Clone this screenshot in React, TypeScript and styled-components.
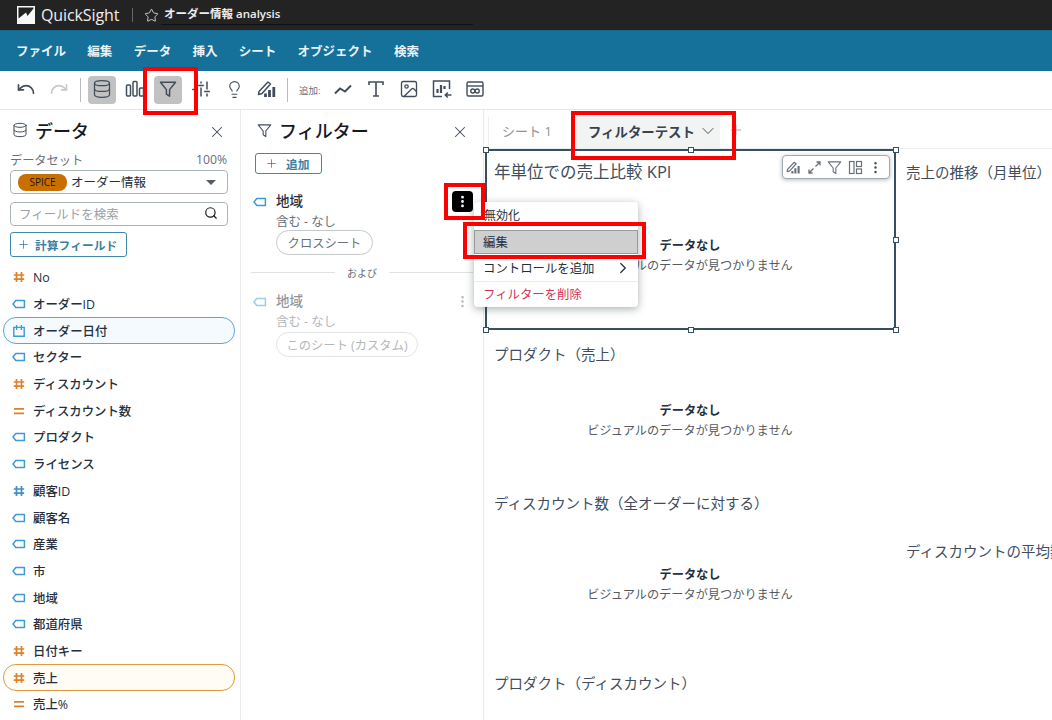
import React from "react";
import styled, { createGlobalStyle } from "styled-components";
import { Undo, Redo, Database, Lightbulb, X, Search, Plus, ChevronDown, ChevronRight, Star, Image as ImageIcon, EllipsisVertical } from "lucide-react";

const Global = createGlobalStyle`
  html, body { margin: 0; padding: 0; background: #fff; }
  body { font-family: "Open Sans", "Noto Sans CJK JP", sans-serif; color: #16191f; }
  * { box-sizing: border-box; }
`;

const Page = styled.div`
  position: relative; width: 1052px; height: 720px; overflow: hidden;
  display: flex; flex-direction: column; background: #fff;
`;
const TopBar = styled.header`
  height: 30px; background: #232323; color: #f2f2f2; display: flex; align-items: center; padding-left: 17px; flex: none;
`;
const Brand = styled.span`
  font-size: 16px; margin-left: 6px; width: 91px; color: #eee; letter-spacing: -.1px;
`;
const TopDivider = styled.i` width: 1px; height: 14px; background: #666; `;
const StarSlot = styled.span` margin-left: 11px; width: 19px; display: flex; color: #ddd; `;
const AnalysisName = styled.div`
  font-size: 11.5px; font-weight: 600; width: 312px; height: 25px; line-height: 27px; margin-left: -2px; padding-left: 3px;
  border-bottom: 1px solid #111; align-self: flex-start; color: #eee;
`;
const MenuBar = styled.nav`
  height: 41px; flex: none; background: #15709a; display: flex; align-items: center; gap: 21.3px; padding-left: 16px;
  border-top: 1px solid #12688f; padding-bottom: 2px;
`;
const MenuItem = styled.span` font-size: 12.5px; font-weight: 700; color: #eaf3f7; white-space: nowrap; `;
const ToolBar = styled.div`
  height: 39px; flex: none; display: flex; align-items: center; padding-left: 10px; border-bottom: 1px solid #e4e6e8; color: #414d5c;
`;
const ToolButton = styled.span<{ $on?: boolean; $faint?: boolean }>`
  width: 33px; height: 28px; display: flex; align-items: center; justify-content: center; position: relative;
  color: ${p => (p.$faint ? "#c5cacf" : "#414d5c")};
  &::before {
    content: ""; position: absolute; top: 0; bottom: 0; left: 2px; right: 3px; border-radius: 4px;
    background: ${p => (p.$on ? "#c2c2c2" : "transparent")};
  }
  & > svg { position: relative; left: -.5px; top: -1px; }
`;
const ToolDivider = styled.i<{ $l: number; $r: number }>`
  width: 1px; height: 24px; background: #b8bcc0; margin: 0 ${p => p.$r}px 0 ${p => p.$l}px;
`;
const AddLabel = styled.span` font-size: 9.5px; color: #687078; width: 28px; white-space: nowrap; `;
const Work = styled.div` flex: 1; display: flex; min-height: 0; `;
const DataPanel = styled.aside`
  width: 241px; flex: none; border-right: 1px solid #e9ebed; padding: 8px 0 0 0;
`;
const FilterPanel = styled.aside`
  width: 243px; flex: none; border-right: 1px solid #e9ebed; padding: 8px 0 0 0; position: relative;
`;
const PanelHead = styled.div<{ $ml: number }>`
  display: flex; align-items: center; height: 24px; margin-left: ${p => p.$ml}px; color: #414d5c; position: relative;
`;
const PanelTitle = styled.h2` font-size: 18px; font-weight: 500; margin: 0 0 0 7px; color: #16191f; `;
const CloseSlot = styled.span<{ $left: number }>`
  position: absolute; left: ${p => p.$left}px; top: 5px; display: flex; color: #414d5c;
`;
const SetRow = styled.div`
  display: flex; justify-content: space-between; width: 217px; margin: 9px 0 2px 10px; font-size: 12.2px; color: #687078; height: 17px; align-items: center;
`;
const SelectBox = styled.div`
  margin-left: 10px; width: 218px; height: 24px; border: 1px solid #aab7b8; border-radius: 4px; display: flex; align-items: center; padding: 0 0 2px 7px; position: relative; font-size: 12.5px; color: #232f3e;
`;
const Spice = styled.span`
  background: #c76f00; color: #24160a; font-size: 10px; border-radius: 8px; height: 17px; width: 49px; text-align: center; line-height: 17px; margin: 2px 4px 0 0; flex: none;
`;
const Caret = styled.i`
  position: absolute; right: 11px; top: 9px; border: 5px solid transparent; border-top: 5px solid #545b64; border-bottom: 0;
`;
const SearchBox = styled.div`
  margin: 8px 0 0 10px; width: 218px; height: 24px; border: 1px solid #aab7b8; border-radius: 4px; display: flex; align-items: center; justify-content: space-between; padding: 0 9px 2px 8px; font-size: 12.5px; color: #9aa1a8;
  & > svg { color: #16191f; }
`;
const OutlineBtn = styled.div<{ $w: number; $h: number; $ml: number; $mt: number; $pad: number; $gap: number }>`
  width: ${p => p.$w}px; height: ${p => p.$h}px; margin: ${p => p.$mt}px 0 0 ${p => p.$ml}px; border: 1px solid #3e88a8; border-radius: 3px;
  display: flex; align-items: center; gap: ${p => p.$gap}px; padding: 0 0 1px ${p => p.$pad}px; font-size: 11.7px; font-weight: 600; color: #3d7f9f; letter-spacing: .1px;
`;
const FieldList = styled.ul` list-style: none; margin: 7px 0 0 3px; padding: 0; `;
const FieldRow = styled.li<{ $hl?: "blue" | "orange" }>`
  width: 232px; height: 26.7px; display: flex; align-items: center; gap: 7px; padding-left: 9px; font-size: 12.4px; font-weight: 500; color: #232f3e;
  border-radius: 13px; position: relative;
  ${p => p.$hl === "blue" ? "border: 1px solid #5ba8d4; background: #f4fafe; padding-left: 8px;" : ""}
  ${p => p.$hl === "orange" ? "border: 1px solid #e09a3e; background: #fffbf5; padding-left: 8px;" : ""}
  & > svg { flex: none; }
`;
const FilterGap = styled.div` height: 16px; `;
const FilterCard = styled.div<{ $dim?: boolean }>`
  position: relative; padding: 0 0 0 35px; height: 62px; opacity: ${p => (p.$dim ? 0.5 : 1)};
`;
const CardName = styled.div` font-size: 13.5px; font-weight: 500; height: 21px; line-height: 22px; color: #232f3e; `;
const CardDesc = styled.div` font-size: 12.4px; color: #687078; height: 19px; line-height: 22px; `;
const Pill = styled.span<{ $w: number; $mt?: number }>`
  display: flex; align-items: center; justify-content: center; width: ${p => p.$w}px; height: 25px; margin-top: ${p => p.$mt ?? 0}px; border: 1px solid #c6c9cc; border-radius: 13px; font-size: 12.3px; color: #687078;
`;
const CardTag = styled.span` position: absolute; left: 12px; top: 5px; display: flex; `;
const KebabSlot = styled.span<{ $dark?: boolean }>`
  position: absolute; left: 211px; top: 1px; width: 21px; height: 21px; border-radius: 4px; display: flex; align-items: center; justify-content: center;
  background: ${p => (p.$dark ? "#000" : "transparent")}; color: ${p => (p.$dark ? "#fff" : "#687078")};
`;
const AndRow = styled.div`
  display: flex; align-items: center; gap: 12px; margin: 13px 0 10px 10px; width: 222px; font-size: 10px; color: #687078;
  &::before, &::after { content: ""; flex: 1; height: 1px; background: #dfe2e4; }
`;
const Main = styled.main` flex: 1; display: flex; flex-direction: column; min-width: 0; `;
const TabRow = styled.div`
  height: 39px; flex: none; display: flex; align-items: stretch; padding-left: 4px; border-bottom: 1px solid #eaeded; color: #8a9199;
`;
const TabPlain = styled.span`
  font-size: 13px; display: flex; align-items: center; padding-left: 13px; width: 87px; color: #8d949b;
  border-left: 1px solid #f0f0f0; height: 28px; align-self: center; margin-top: 3px;
`;
const TabActive = styled.span`
  width: 145px; background: #f2f3f3; display: flex; align-items: center; justify-content: space-between; padding: 3px 2px 0 13px; font-size: 13.4px; font-weight: 700; color: #37424f;
  margin-top: 1px;
`;
const TabPlus = styled.span` display: flex; align-items: center; margin-left: 8px; color: #9aa0a6; padding-top: 2px; `;
const Canvas = styled.div` display: flex; flex: 1; min-height: 0; `;
const LeftCol = styled.div` width: 412px; flex: none; `;
const RightCol = styled.div` flex: 1; padding: 14px 0 0 10px; white-space: nowrap; overflow: hidden; `;
const Visual = styled.section<{ $h: number; $selected?: boolean; $pad: number }>`
  height: ${p => p.$h}px; position: relative; padding: ${p => p.$pad}px 0 0 10px;
  ${p => p.$selected ? "outline: 2px solid #37505f; outline-offset: -2px; margin-left: 1px; padding-left: 9px;" : ""}
`;
const VisualTitle = styled.h3<{ $mt?: number; $big?: boolean }>`
  font-size: ${p => (p.$big ? 16.5 : 14.5)}px; font-weight: 400; line-height: 20px; margin: ${p => p.$mt ?? 0}px 0 0; color: #414d5c; white-space: nowrap;
`;
const NoData = styled.div<{ $mt: number }>`
  margin: ${p => p.$mt}px 0 0 -10px; text-align: center; width: 412px; line-height: 20px;
`;
const NoDataHead = styled.div` font-size: 12.2px; font-weight: 700; color: #232f3e; `;
const NoDataSub = styled.div` font-size: 12.2px; color: #545b64; `;
const Handle = styled.i<{ $x: string; $y: string }>`
  position: absolute; left: ${p => p.$x}; top: ${p => p.$y}; width: 6px; height: 6px; margin: -3px 0 0 -3px; background: #fff; border: 1px solid #37505f;
`;
const FloatBar = styled.div`
  position: absolute; left: 297px; top: 6px; width: 108px; height: 24px; background: #fff; border: 1px solid #9fabb0; border-radius: 4px;
  box-shadow: 0 1px 4px rgba(0,28,36,.3); display: flex; align-items: center; gap: 3.5px; padding-left: 2px; color: #687078;
`;
const FloatIcon = styled.span` width: 17px; display: flex; justify-content: center; `;
const Popover = styled.div`
  position: absolute; left: 474px; top: 202px; width: 164px; height: 105px; background: #fff; border-radius: 4px;
  box-shadow: 0 2px 8px rgba(0,28,36,.35); padding-top: 1px; font-size: 12.4px; color: #232f3e;
`;
const PopItem = styled.div<{ $active?: boolean; $danger?: boolean; $line?: boolean }>`
  height: ${p => (p.$active ? 24 : 26)}px; display: flex; align-items: center; justify-content: space-between; padding: 0 6px 0 9px; position: relative;
  ${p => p.$active ? "background: #cfcfcf; border: 1px solid #9a9a9a; margin: 2px 0 1px; padding-left: 8px;" : ""}
  ${p => p.$danger ? "color: #d13558; padding-bottom: 2px;" : ""}
  ${p => p.$line ? "border-top: 1px solid #eaeded;" : ""}
`;
const PopFirst = styled(PopItem)` padding: 0 6px 2px 10px; height: 25px; font-size: 12px; `;
const RedBox = styled.i<{ $l: number; $t: number; $w: number; $h: number }>`
  position: absolute; left: ${p => p.$l}px; top: ${p => p.$t}px; width: ${p => p.$w}px; height: ${p => p.$h}px; border: 4px solid #f00; pointer-events: none;
`;

const Tag = ({ c = "#3f9ad0", s = 14 }: { c?: string; s?: number }) => (
  <svg width={s} height={s} viewBox="0 0 14 14" fill="none" stroke={c} strokeWidth="1.5"><path d="M1 7 L3.8 3.6 H12.4 V10.4 H3.8 Z" strokeLinejoin="round" /></svg>
);
const Hash = ({ c = "#d9822b" }: { c?: string }) => (
  <svg width="14" height="14" viewBox="0 0 14 14" fill="none" stroke={c} strokeWidth="1.7"><path d="M4.5 2v10M9.5 2v10M1.8 5h10.4M1.8 9.2h10.4" /></svg>
);
const Equal = () => (
  <svg width="14" height="14" viewBox="0 0 14 14" fill="none" stroke="#d9822b" strokeWidth="1.8"><path d="M2 4.8h10M2 9.4h10" /></svg>
);
const Cal = () => (
  <svg width="14" height="14" viewBox="0 0 14 14" fill="none" stroke="#3f9ad0" strokeWidth="1.4"><path d="M1.8 3.4h10.4v8.8H1.8zM4.6 1v5M9.4 1v5" /></svg>
);
const FunnelIcon = ({ s = 18, w = 1.5 }: { s?: number; w?: number }) => (
  <svg width={s} height={s} viewBox="0 0 18 18" fill="none" stroke="currentColor" strokeWidth={w} strokeLinejoin="round"><path d="M1.5 2.2h15L10.6 9.6v6.6l-3.2-2V9.6z" /></svg>
);
const Logo = () => (
  <svg width="18" height="18" viewBox="0 0 18 18"><path fill="#f7f7f7" d="M0 0h18v18H0z" /><path fill="#232323" d="M1.5 1.5h15v1L10.5 10 9 6.5 1.5 12.5z" /></svg>
);
const Bars = () => (
  <svg width="20" height="20" viewBox="0 0 20 20" fill="none" stroke="currentColor" strokeWidth="1.5"><rect x="1.5" y="6" width="4" height="11" rx="1" /><rect x="8" y="2.5" width="4" height="14.5" rx="1" /><rect x="14.5" y="9" width="4" height="8" rx="1" /></svg>
);
const Sliders = () => (
  <svg width="20" height="20" viewBox="0 0 20 20" fill="none" stroke="currentColor" strokeWidth="1.5"><path d="M4 2.5v6M4 12.5v5M10 2.5v2M10 8.5v9M16 2.5v8M16 14.5v3M1.2 10.5h5.6M7.2 6.5h5.6M13.2 12.5h5.6" /></svg>
);
const BrushChart = ({ s = 20 }: { s?: number }) => (
  <svg width={s} height={s} viewBox="0 0 20 20" fill="none" stroke="currentColor" strokeWidth="1.5"><path d="M2 12.5 L11 3 L13.5 5 L5 14.5 L1.5 15.5z" strokeLinejoin="round" /><path d="M8.5 18v-3.5M12.5 18v-7M16.8 18V8" strokeWidth="2.8" /></svg>
);
const LineChartIcon = () => (
  <svg width="20" height="20" viewBox="0 0 20 20" fill="none" stroke="currentColor" strokeWidth="2"><path d="M2 14.5l5-5 5 3 6-6" /></svg>
);
const BigT = () => (
  <svg width="20" height="20" viewBox="0 0 20 20" fill="none" stroke="currentColor" strokeWidth="1.6"><path d="M3 6V3h14v3M10 3v14M7 17h6" /></svg>
);
const ChartIn = () => (
  <svg width="22" height="22" viewBox="0 0 22 22" fill="none" stroke="currentColor" strokeWidth="1.5"><path d="M11 18.5H2.5V3h16v8" /><path d="M6.5 15v-4M10 15V7M13.5 11V8" strokeWidth="2.2" /><path d="M20.5 17h-6M16.8 14.5L14.3 17l2.5 2.5" /></svg>
);
const Embed = () => (
  <svg width="20" height="20" viewBox="0 0 20 20" fill="none" stroke="currentColor" strokeWidth="1.4"><rect x="2" y="3" width="16" height="14" rx="1.5" /><path d="M2 7h16" /><circle cx="7.8" cy="12" r="2" /><circle cx="12.2" cy="12" r="2" /></svg>
);
const Expand = () => (
  <svg width="15" height="15" viewBox="0 0 15 15" fill="none" stroke="currentColor" strokeWidth="1.3"><path d="M8.5 6.5L13 2M9.5 2H13V5.5M6.5 8.5L2 13M2 9.5V13H5.5" /></svg>
);
const Layout = () => (
  <svg width="15" height="15" viewBox="0 0 15 15" fill="none" stroke="currentColor" strokeWidth="1.2"><rect x="1.5" y="1.5" width="4.5" height="12" /><rect x="8.5" y="1.5" width="5" height="5" /><rect x="8.5" y="9" width="5" height="4.5" /></svg>
);

type F = { n: string; i: React.ReactNode; hl?: "blue" | "orange" };
const fields: F[] = [
  { n: "No", i: <Hash /> },
  { n: "オーダーID", i: <Tag /> },
  { n: "オーダー日付", i: <Cal />, hl: "blue" },
  { n: "セクター", i: <Tag /> },
  { n: "ディスカウント", i: <Hash /> },
  { n: "ディスカウント数", i: <Equal /> },
  { n: "プロダクト", i: <Tag /> },
  { n: "ライセンス", i: <Tag /> },
  { n: "顧客ID", i: <Hash c="#3f8fc4" /> },
  { n: "顧客名", i: <Tag /> },
  { n: "産業", i: <Tag /> },
  { n: "市", i: <Tag /> },
  { n: "地域", i: <Tag /> },
  { n: "都道府県", i: <Tag /> },
  { n: "日付キー", i: <Hash /> },
  { n: "売上", i: <Hash />, hl: "orange" },
  { n: "売上%", i: <Equal /> },
];
const menus = ["ファイル", "編集", "データ", "挿入", "シート", "オブジェクト", "検索"];
const handles: [string, string][] = [["1px", "1px"], ["50%", "1px"], ["100%", "1px"], ["1px", "50%"], ["100%", "50%"], ["1px", "100%"], ["50%", "100%"], ["100%", "100%"]];

const NoDataBlock = ({ mt }: { mt: number }) => (
  <NoData $mt={mt}>
    <NoDataHead>データなし</NoDataHead>
    <NoDataSub>ビジュアルのデータが見つかりません</NoDataSub>
  </NoData>
);

export default function App() {
  return (
    <Page>
      <Global />
      <TopBar>
        <Logo />
        <Brand>QuickSight</Brand>
        <TopDivider />
        <StarSlot><Star size={15} strokeWidth={1.4} /></StarSlot>
        <AnalysisName>オーダー情報 analysis</AnalysisName>
      </TopBar>
      <MenuBar>{menus.map(m => <MenuItem key={m}>{m}</MenuItem>)}</MenuBar>
      <ToolBar>
        <ToolButton><Undo size={20} strokeWidth={2} /></ToolButton>
        <ToolButton $faint><Redo size={20} strokeWidth={2} /></ToolButton>
        <ToolDivider $l={4} $r={5} />
        <ToolButton $on><Database size={20} strokeWidth={1.5} /></ToolButton>
        <ToolButton><Bars /></ToolButton>
        <ToolButton $on><FunnelIcon /></ToolButton>
        <ToolButton><Sliders /></ToolButton>
        <ToolButton><Lightbulb size={19} strokeWidth={1.4} /></ToolButton>
        <ToolButton><BrushChart /></ToolButton>
        <ToolDivider $l={3} $r={11} />
        <AddLabel>追加:</AddLabel>
        <ToolButton><LineChartIcon /></ToolButton>
        <ToolButton><BigT /></ToolButton>
        <ToolButton><ImageIcon size={20} strokeWidth={1.6} /></ToolButton>
        <ToolButton><ChartIn /></ToolButton>
        <ToolButton><Embed /></ToolButton>
      </ToolBar>
      <Work>
        <DataPanel>
          <PanelHead $ml={12}>
            <Database size={16} strokeWidth={1.5} />
            <PanelTitle>データ</PanelTitle>
            <CloseSlot $left={196}><X size={18} strokeWidth={1.4} /></CloseSlot>
          </PanelHead>
          <SetRow><span>データセット</span><span>100%</span></SetRow>
          <SelectBox><Spice>SPICE</Spice>オーダー情報<Caret /></SelectBox>
          <SearchBox>フィールドを検索<Search size={14} strokeWidth={2} /></SearchBox>
          <OutlineBtn $w={117} $h={25} $ml={10} $mt={6} $pad={6} $gap={5}><Plus size={13} strokeWidth={1.5} />計算フィールド</OutlineBtn>
          <FieldList>
            {fields.map(f => <FieldRow key={f.n} $hl={f.hl}>{f.i}{f.n}</FieldRow>)}
          </FieldList>
        </DataPanel>
        <FilterPanel>
          <PanelHead $ml={16}>
            <FunnelIcon s={15} w={1.3} />
            <PanelTitle>フィルター</PanelTitle>
            <CloseSlot $left={194}><X size={18} strokeWidth={1.4} /></CloseSlot>
          </PanelHead>
          <OutlineBtn $w={67} $h={21} $ml={14} $mt={11} $pad={9} $gap={8}><Plus size={13} strokeWidth={1.5} />追加</OutlineBtn>
          <FilterGap />
          <FilterCard>
            <CardTag><Tag /></CardTag>
            <CardName>地域</CardName>
            <CardDesc>含む - なし</CardDesc>
            <Pill $w={97}>クロスシート</Pill>
            <KebabSlot $dark><EllipsisVertical size={15} strokeWidth={2.5} /></KebabSlot>
          </FilterCard>
          <AndRow>および</AndRow>
          <FilterCard $dim>
            <CardTag><Tag /></CardTag>
            <CardName>地域</CardName>
            <CardDesc>含む - なし</CardDesc>
            <Pill $w={142} $mt={2}>このシート (カスタム)</Pill>
            <KebabSlot><EllipsisVertical size={15} strokeWidth={2} /></KebabSlot>
          </FilterCard>
        </FilterPanel>
        <Main>
          <TabRow>
            <TabPlain>シート 1</TabPlain>
            <TabActive>フィルターテスト<ChevronDown size={20} strokeWidth={1.1} /></TabActive>
            <TabPlus><Plus size={16} strokeWidth={1.4} /></TabPlus>
          </TabRow>
          <Canvas>
            <LeftCol>
              <Visual $h={181} $selected $pad={13}>
                <VisualTitle $big>年単位での売上比較 KPI</VisualTitle>
                <NoDataBlock mt={54} />
                {handles.map(([x, y]) => <Handle key={x + y} $x={x} $y={y} />)}
                <FloatBar>
                  <FloatIcon><BrushChart s={15} /></FloatIcon>
                  <FloatIcon><Expand /></FloatIcon>
                  <FloatIcon><FunnelIcon s={15} w={1.3} /></FloatIcon>
                  <FloatIcon><Layout /></FloatIcon>
                  <FloatIcon><EllipsisVertical size={15} strokeWidth={2} color="#414d5c" /></FloatIcon>
                </FloatBar>
              </Visual>
              <Visual $h={148} $pad={15}>
                <VisualTitle>プロダクト（売上）</VisualTitle>
                <NoDataBlock mt={36} />
              </Visual>
              <Visual $h={180} $pad={16}>
                <VisualTitle>ディスカウント数（全オーダーに対する）</VisualTitle>
                <NoDataBlock mt={51} />
              </Visual>
              <Visual $h={60} $pad={16}>
                <VisualTitle>プロダクト（ディスカウント）</VisualTitle>
              </Visual>
            </LeftCol>
            <RightCol>
              <VisualTitle>売上の推移（月単位）</VisualTitle>
              <VisualTitle $mt={359}>ディスカウントの平均数</VisualTitle>
            </RightCol>
          </Canvas>
        </Main>
      </Work>
      <Popover>
        <PopFirst>無効化</PopFirst>
        <PopItem $active>編集</PopItem>
        <PopItem>コントロールを追加<ChevronRight size={18} strokeWidth={1.6} /></PopItem>
        <PopItem $line $danger>フィルターを削除</PopItem>
      </Popover>
      <RedBox $l={143} $t={67} $w={55} $h={48} />
      <RedBox $l={571} $t={111} $w={165} $h={49} />
      <RedBox $l={444} $t={183} $w={41} $h={37} />
      <RedBox $l={463} $t={222} $w={183} $h={37} />
    </Page>
  );
}
